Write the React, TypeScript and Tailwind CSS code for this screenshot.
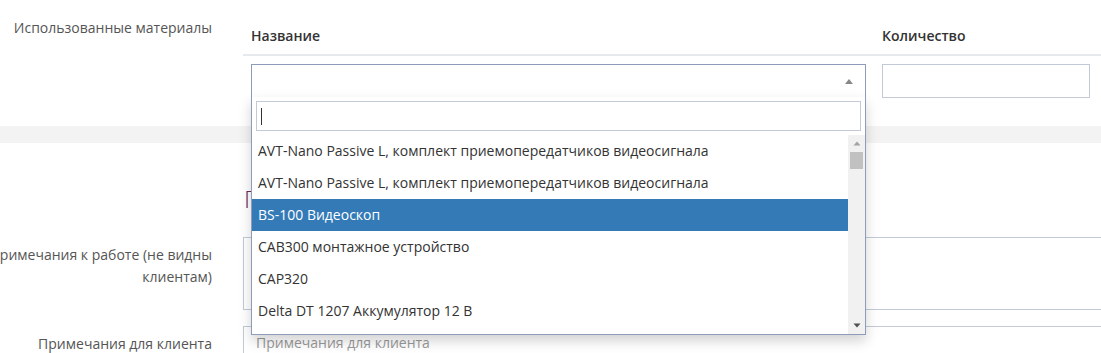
import React from "react";

const items = [
  "AVT-Nano Passive L, комплект приемопередатчиков видеосигнала",
  "AVT-Nano Passive L, комплект приемопередатчиков видеосигнала",
  "BS-100 Видеоскоп",
  "CAB300 монтажное устройство",
  "CAP320",
  "Delta DT 1207 Аккумулятор 12 В",
  "Dahua DH-PFA130-E кронштейн",
];

function Dropdown() {
  return (
    <div className="absolute left-[251px] top-[97px] w-[615px] h-[238px] bg-white border border-t-0 border-[#8e9cba] shadow-[0_6px_12px_rgba(0,0,0,0.175)] flex flex-col">
      <div className="px-[4px] pt-[4px] pb-[4px]">
        <div className="h-[30px] border border-[#c2cad8] flex items-center pl-[4px]">
          <span className="block w-px h-[17px] bg-[#333]" />
        </div>
      </div>
      <div className="flex h-[199px] overflow-hidden">
        <ul className="flex-1 overflow-hidden">
          {items.map((t, i) => (
            <li
              key={i}
              className={
                "h-[32px] shrink-0 px-[6px] py-[6px] leading-[20px] whitespace-nowrap " +
                (i === 2 ? "bg-[#337ab7] text-white" : "text-[#333]")
              }
            >
              {t}
            </li>
          ))}
        </ul>
        <div className="w-[17px] bg-[#f1f1f1] flex flex-col">
          <div className="h-[17px] flex items-center justify-center">
            <svg width="8" height="5" viewBox="0 0 8 5">
              <polygon points="0.5,4.5 4,0.5 7.5,4.5" fill="#a3a3a3" />
            </svg>
          </div>
          <div className="mx-[2px] h-[17px] bg-[#c1c1c1]" />
          <div className="flex-1" />
          <div className="h-[17px] flex items-center justify-center">
            <svg width="8" height="5" viewBox="0 0 8 5">
              <polygon points="0.5,0.5 7.5,0.5 4,4.5" fill="#505050" />
            </svg>
          </div>
        </div>
      </div>
    </div>
  );
}

export default function App() {
  return (
    <div className="relative w-[1101px] h-[353px] overflow-hidden bg-white font-['Open_Sans',sans-serif] text-[14px] text-[#333]">
      {/* Materials section */}
      <div className="flex h-[126px]">
        <div className="w-[225px] -ml-[13px] shrink-0 pt-[18px] text-right leading-[20px] text-[#555]">
          Использованные материалы
        </div>
        <div className="ml-[31px] mt-[18px] w-[900px] shrink-0">
          <div className="flex border-b-2 border-[#e7eaec]">
            <div className="w-[631px] px-[8px] py-[8px] leading-[20px] font-semibold">Название</div>
            <div className="w-[224px] px-[8px] py-[8px] leading-[20px] font-semibold">Количество</div>
          </div>
          <div className="flex">
            <div className="w-[631px] px-[8px] pt-[8px]">
              <div className="relative h-[34px] border border-[#8e9cba] bg-white">
                <svg className="absolute right-[12px] top-[14px]" width="8" height="5" viewBox="0 0 8 5">
                  <polygon points="0,5 4,0 8,5" fill="#888" />
                </svg>
              </div>
            </div>
            <div className="w-[224px] px-[8px] pt-[8px]">
              <div className="h-[34px] border border-[#c2cad8]" />
            </div>
          </div>
        </div>
      </div>

      {/* Separator band */}
      <div className="h-[17px] bg-[#f3f3f4]" />

      {/* Notes section */}
      <div className="pt-[43px]">
        <div className="pl-[244px] text-[24px] leading-[26px] font-light text-[#6b2c63] whitespace-nowrap">
          Примечания
        </div>
        <div className="flex mt-[25px]">
          <div className="w-[225px] -ml-[13px] shrink-0 pt-[7px] text-right leading-[22px] text-[#555]">
            Примечания к работе (не видны клиентам)
          </div>
          <div className="ml-[31px] w-[900px] h-[73px] shrink-0 border border-[#c2cad8]" />
        </div>
        <div className="flex mt-[16px]">
          <div className="w-[225px] -ml-[13px] shrink-0 pt-[7px] text-right leading-[22px] text-[#555]">
            Примечания для клиента
          </div>
          <div className="ml-[31px] w-[900px] h-[34px] shrink-0 border border-[#c2cad8] px-[12px] pt-[6px] leading-[20px] text-[#999]">
            Примечания для клиента
          </div>
        </div>
      </div>

      <Dropdown />
    </div>
  );
}
